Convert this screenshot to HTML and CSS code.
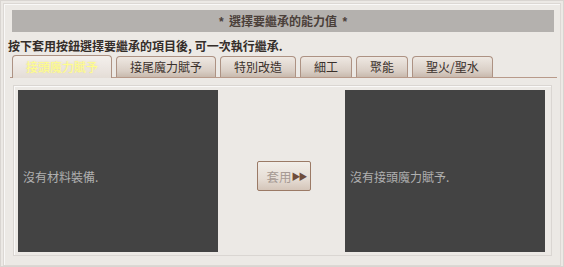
FILE: index.html
```html
<!DOCTYPE html>
<html lang="zh-Hant">
<head>
  <meta charset="UTF-8">
  <title>能力值繼承</title>
  <link rel="stylesheet" href="styles.css">
</head>
<body>
  <div class="window">
    <div class="window-inner">
      <div class="title-bar"><span class="star">*</span>&nbsp; 選擇要繼承的能力值 &nbsp;<span class="star">*</span></div>
      <p class="hint">按下套用按鈕選擇要繼承的項目後, 可一次執行繼承.</p>

      <div class="tabs">
        <span class="tab active">接頭魔力賦予</span>
        <span class="tab">接尾魔力賦予</span>
        <span class="tab">特別改造</span>
        <span class="tab">細工</span>
        <span class="tab">聚能</span>
        <span class="tab">聖火/聖水</span>
      </div>

      <div class="panel">
        <div class="slot">沒有材料裝備.</div>
        <div class="middle">
          <button class="apply" disabled>套用<span class="arrows">▶▶</span></button>
        </div>
        <div class="slot">沒有接頭魔力賦予.</div>
      </div>
    </div>
  </div>
</body>
</html>
```

FILE: styles.css
```css
/* styles.css */
body {
  margin: 0;
  padding: 0;
  background: #ece9e5;
  font-family: "Noto Sans CJK TC", "Liberation Sans", sans-serif;
  font-size: 12px;
}

.window {
  width: 564px;
  height: 267px;
  box-sizing: border-box;
  border: 1px solid #d9d5d1;
  background: #ece9e5;
  padding: 1px;
}

.window-inner {
  height: 100%;
  box-sizing: border-box;
  margin: 1px;
  border: 1px solid #dcd8d4;
  box-shadow: inset 1px 1px 0 #f9f8f7;
  padding: 6px 0 0 4px;
}

.title-bar {
  margin-left: 4px;
  width: 542px;
  height: 22px;
  line-height: 22px;
  background: #b4b1ae;
  color: #4b403a;
  font-weight: bold;
  text-align: center;
}

.star {
  font-family: "Liberation Sans", sans-serif;
  font-size: 12px;
}

.hint {
  margin: 6px 0 0;
  height: 16px;
  line-height: 16px;
  color: #352e2a;
  font-weight: bold;
}

.tabs {
  margin: 2px 0 0 2px;
  width: 547px;
  height: 22px;
  padding-left: 2px;
  box-sizing: border-box;
  display: flex;
  align-items: flex-end;
  gap: 4px;
  border-bottom: 1px solid #b89a8a;
}

.tab {
  height: 21px;
  box-sizing: border-box;
  padding: 0 13px;
  border: 1px solid #ad9283;
  border-bottom: none;
  border-radius: 4px 4px 0 0;
  background: linear-gradient(#eee8e2, #d9cec5 70%, #c8b9ad);
  color: #3a302b;
  line-height: 20px;
  font-size: 12px;
  white-space: nowrap;
}

.tab.active {
  height: 23px;
  margin-bottom: -1px;
  line-height: 22px;
  background: linear-gradient(#f4f0ec, #ebe5e0 60%, #e4ddd6);
  color: #ffff8c;
  text-shadow: 0 0 2px #e8d890;
}

.panel {
  margin: 7px 0 0 5px;
  width: 539px;
  height: 171px;
  box-sizing: border-box;
  border: 1px solid #dad6d2;
  box-shadow: inset 1px 1px 0 #faf9f8;
  padding: 4px 6px 3px 4px;
  display: flex;
}

.slot {
  width: 200px;
  background: #434343;
  color: #b0b0b0;
  padding: 10px 0 0 5px;
  box-sizing: border-box;
  display: flex;
  align-items: center;
}

.middle {
  flex: 1;
  display: flex;
  justify-content: center;
  align-items: center;
  padding: 10px 0 0 5px;
}

.apply {
  width: 54px;
  height: 30px;
  padding: 0 0 0 4px;
  border: 1px solid #9b7a66;
  border-radius: 2px;
  background: linear-gradient(#f2eee9, #e6ddd5 60%, #d4c5b9);
  color: #a69a93;
  font-family: inherit;
  font-size: 12.5px;
  display: flex;
  align-items: center;
  justify-content: center;
}

.arrows {
  color: #6e4c3c;
  font-size: 9px;
  letter-spacing: -2px;
}
```
